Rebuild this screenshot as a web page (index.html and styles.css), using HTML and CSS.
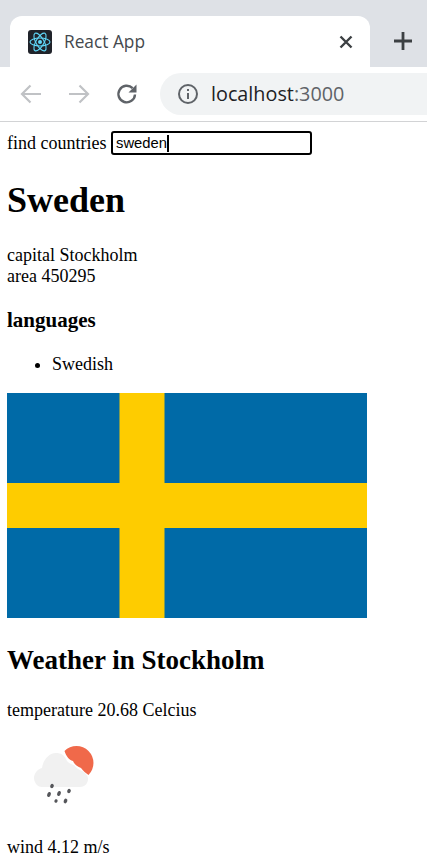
FILE: index.html
```html
<!DOCTYPE html>
<html lang="en">
<head>
<meta charset="utf-8">
<title>React App</title>
<link rel="stylesheet" href="styles.css">
</head>
<body>
<header class="chrome">
  <div class="tabstrip">
    <div class="tab">
      <svg class="favicon" viewBox="0 0 24 24" width="24" height="24">
        <rect width="24" height="24" rx="3" fill="#20232a"/>
        <g fill="none" stroke="#61dafb" stroke-width="1.1">
          <ellipse cx="12" cy="12" rx="10" ry="4"/>
          <ellipse cx="12" cy="12" rx="10" ry="4" transform="rotate(60 12 12)"/>
          <ellipse cx="12" cy="12" rx="10" ry="4" transform="rotate(120 12 12)"/>
        </g>
        <circle cx="12" cy="12" r="2" fill="#61dafb"/>
      </svg>
      <span class="tab-title">React App</span>
      <svg class="tab-close" viewBox="0 0 14 14" width="14" height="14">
        <path d="M1.500 1.500L12.500 12.500M12.500 1.500L1.500 12.500" stroke="#3c4043" stroke-width="2.400" fill="none"/>
      </svg>
    </div>
    <svg class="new-tab" viewBox="0 0 18 18" width="18" height="18">
      <path d="M9 0V18M0 9H18" stroke="#3c4043" stroke-width="2.800" fill="none"/>
    </svg>
  </div>
  <div class="toolbar">
    <svg class="nav-icon" viewBox="0 0 24 24" width="24" height="24">
      <path d="M22 12H3M11.500 3.500L3 12L11.500 20.500" stroke="#c0c2c5" stroke-width="2.200" fill="none"/>
    </svg>
    <svg class="nav-icon" viewBox="0 0 24 24" width="24" height="24">
      <path d="M2 12H21M12.500 3.500L21 12L12.500 20.500" stroke="#c0c2c5" stroke-width="2.200" fill="none"/>
    </svg>
    <svg class="nav-icon" viewBox="0 0 24 24" width="24" height="24">
      <path d="M20 12.500A8.300 8.300 0 1 1 17.600 6.200" stroke="#5f6368" stroke-width="2.400" fill="none"/>
      <path d="M21.500 2.500V10.500H13.500Z" fill="#5f6368"/>
    </svg>
    <div class="omnibox">
      <svg class="info" viewBox="0 0 22 22" width="22" height="22">
        <circle cx="11" cy="11" r="9" stroke="#5f6368" stroke-width="2" fill="none"/>
        <path d="M11 10V16M11 6V8" stroke="#5f6368" stroke-width="2" fill="none"/>
      </svg>
      <span class="url">localhost<span class="port">:3000</span></span>
    </div>
  </div>
</header>
<main class="page">
  <div class="search">find countries <span class="field">sweden<span class="caret"></span></span></div>
  <h1>Sweden</h1>
  <p class="facts">capital Stockholm<br>area 450295</p>
  <h3>languages</h3>
  <ul><li>Swedish</li></ul>
  <svg class="flag" viewBox="0 0 16 10" width="360" height="225">
    <rect width="16" height="10" fill="#006aa7"/>
    <rect x="5" width="2" height="10" fill="#fecc00"/>
    <rect y="4" width="16" height="2" fill="#fecc00"/>
  </svg>
  <h2>Weather in Stockholm</h2>
  <p class="temp">temperature 20.68 Celcius</p>
  <svg class="weather" viewBox="0 0 90 80" width="90" height="80">
    <path d="M44.500 16A14.500 14.500 0 1 1 68.500 40C66 38 63 36 61 33C58 32 54 29 53 26C49 25 46 21 44.500 16Z" fill="#f0694a"/>
    <path d="M22 52C17 52 14 47 14 43C14 38 18 34 22 33C23 25 29 18 36 18C41 18 44 20 46 24C47 27 50 29 54 30C56 33 59 35 62 36C65 38 68 40 68 44C68 49 64 52 60 52Z" fill="#f1f1f1"/>
    <g fill="#55565a">
      <ellipse cx="32" cy="51" rx="1.800" ry="2.200" transform="rotate(20 32 51)"/>
      <ellipse cx="29" cy="59.500" rx="1.800" ry="2.600" transform="rotate(20 29 59.500)"/>
      <ellipse cx="39" cy="58.500" rx="1.800" ry="2.600" transform="rotate(20 39 58.500)"/>
      <ellipse cx="49" cy="56" rx="1.800" ry="2.200" transform="rotate(20 49 56)"/>
      <ellipse cx="36" cy="66" rx="1.600" ry="1.800" transform="rotate(20 36 66)"/>
      <ellipse cx="45.500" cy="66" rx="1.800" ry="2.400" transform="rotate(20 45.500 66)"/>
    </g>
  </svg>
  <p class="wind">wind 4.12 m/s</p>
</main>
</body>
</html>
```
FILE: styles.css
```css
* { box-sizing: border-box; }
html, body { margin: 0; padding: 0; }
body { width: 427px; height: 866px; overflow: hidden; background: #fff; color: #000; font-family: "Liberation Serif", serif; font-size: 18px; line-height: 21px; }
.chrome { font-family: "Open Sans", "Noto Sans", sans-serif; }
.tabstrip { height: 67px; background: #dee1e6; display: flex; align-items: flex-end; padding-left: 10px; }
.tab { width: 360px; height: 51px; background: #fff; border-radius: 12px 12px 0 0; display: flex; align-items: center; padding: 0 17px 0 18px; }
.favicon { flex: none; }
.tab-title { flex: 1; margin-left: 12px; font-size: 17.300px; color: #45494e; }
.new-tab { margin: 0 0 17px 24px; }
.toolbar { height: 55px; border-bottom: 1px solid #d2d3d5; display: flex; align-items: center; padding-left: 19px; }
.nav-icon { margin-right: 24px; flex: none; }
.nav-icon:nth-child(3) { margin-right: 21px; }
.omnibox { flex: 1; height: 42px; background: #f1f3f4; border-radius: 21px 0 0 21px; display: flex; align-items: center; padding-left: 17px; margin-top: -1px; }
.url { margin-left: 12px; font-size: 19.800px; color: #202124; }
.port { color: #5f6368; }
.page { padding: 9px 0 0 7px; }
.search { height: 24px; display: flex; align-items: center; white-space: pre; }
.field { margin-left: 0; width: 201px; height: 24px; border: 2px solid #000; border-radius: 3px; font-family: "Liberation Sans", sans-serif; font-size: 14.800px; line-height: 19px; padding-left: 3px; display: flex; align-items: center; }
.caret { width: 1.500px; height: 17px; background: #000; }
h1 { font-size: 36px; line-height: 41px; margin: 25px 0 24px; }
.facts { margin: 0 0 21px; }
h3 { font-size: 21px; line-height: 24px; margin: 0 0 22px; }
ul { margin: 0 0 18px; padding-left: 45px; }
.flag { display: block; }
h2 { font-size: 27px; line-height: 31px; margin: 27px 0 24px; }
.temp { margin: 0 0 14px; }
.weather { display: block; margin-left: 13px; }
.wind { margin: 22px 0 0; }
```
